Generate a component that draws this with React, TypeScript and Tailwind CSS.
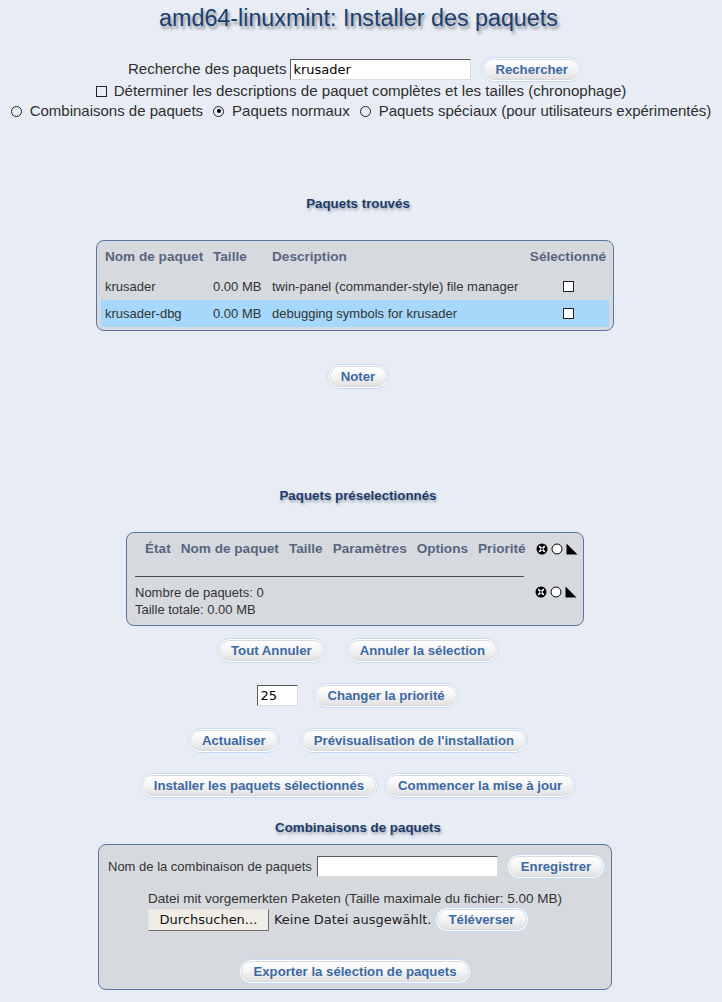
import React from "react";

function Btn({ children, className = "" }: { children: React.ReactNode; className?: string }) {
  return (
    <button
      type="button"
      className={`inline-flex shrink-0 rounded-full border border-[#c3d9f4] bg-white p-px ${className}`}
    >
      <span className="flex h-[21px] items-center whitespace-nowrap rounded-full border border-[#d5d9df] bg-linear-to-b from-white via-[#f4f4f4] to-[#e1e1e1] px-[11px] text-[13.2px] font-bold leading-none text-[#3d69a4]">
        {children}
      </span>
    </button>
  );
}

function TextInput({ value, className = "" }: { value: string; className?: string }) {
  return (
    <div
      className={`flex h-[21px] items-center border border-t-[#5a5a5a] border-l-[#5a5a5a] border-r-[#dcdcdc] border-b-[#dcdcdc] bg-white pl-[2px] font-['DejaVu_Sans',sans-serif] text-[13px] text-black ${className}`}
    >
      {value}
    </div>
  );
}

function Radio({ checked = false }: { checked?: boolean }) {
  return (
    <span className="flex h-[11px] w-[11px] shrink-0 items-center justify-center rounded-full border border-[#222]">
      {checked && <span className="h-[4px] w-[4px] rounded-full bg-black" />}
    </span>
  );
}

function Check({ white = false }: { white?: boolean }) {
  return <span className={`inline-block h-[11px] w-[11px] border border-[#222] ${white ? "bg-white" : ""}`} />;
}

function SelIcons() {
  return (
    <div className="flex items-center gap-[3px]">
      <svg width="12" height="12" viewBox="0 0 12 12">
        <circle cx="6" cy="6" r="5.5" fill="#000" />
        <path d="M3.2 3.2L8.8 8.8M8.8 3.2L3.2 8.8" stroke="#fff" strokeWidth="1.7" />
        <circle cx="6" cy="6" r="1" fill="#000" />
      </svg>
      <svg width="12" height="12" viewBox="0 0 12 12">
        <circle cx="6" cy="6" r="5" fill="#fff" stroke="#000" strokeWidth="1" />
      </svg>
      <svg width="12" height="12" viewBox="0 0 12 12">
        <path d="M0.5 0.5L11.5 11.5L0.5 11.5Z" fill="#000" />
      </svg>
    </div>
  );
}

function Heading({ children, className = "" }: { children: React.ReactNode; className?: string }) {
  return (
    <h2
      className={`ml-[-6px] text-[13.33px] font-bold leading-[20px] text-[#1d3b6a] [text-shadow:1px_2px_3px_#9ba1ab] ${className}`}
    >
      {children}
    </h2>
  );
}

export default function App() {
  return (
    <div className="flex min-h-[1002px] w-full flex-col items-center bg-[#e8edf5] font-['Liberation_Sans',Arial,sans-serif] text-[#2e2e2e]">
      <h1 className="mt-[3px] ml-[-5px] text-[23.3px] leading-[30px] text-[#1c3e6d] [text-shadow:2px_3px_3px_#8d929c]">
        amd64-linuxmint: Installer des paquets
      </h1>

      <div className="mt-[24px] ml-[-12px] flex h-[25px] items-center">
        <span className="text-[15px]">Recherche des paquets</span>
        <TextInput value="krusader" className="ml-[4px] w-[181px]" />
        <Btn className="ml-[10px]">Rechercher</Btn>
      </div>

      <div className="mt-[-1px] flex h-[20px] items-center text-[15.1px]">
        <Check />
        <span className="ml-[7px]">Déterminer les descriptions de paquet complètes et les tailles (chronophage)</span>
      </div>

      <div className="flex h-[20px] items-center text-[15px]">
        <Radio />
        <span className="ml-[8px]">Combinaisons de paquets</span>
        <span className="ml-[10px]">
          <Radio checked />
        </span>
        <span className="ml-[8px]">Paquets normaux</span>
        <span className="ml-[10px]">
          <Radio />
        </span>
        <span className="ml-[8px]">Paquets spéciaux (pour utilisateurs expérimentés)</span>
      </div>

      <Heading className="mt-[73px]">Paquets trouvés</Heading>

      <div className="mt-[26px] ml-[-12px] w-[518px] rounded-[8px] border border-[#5a76a0] bg-[#d6dadf] px-[4px] pt-[2px] pb-[3px]">
        <div className="grid h-[27px] grid-cols-[108px_59px_259px_82px] items-center pt-[2px] text-[13.6px] font-bold text-[#58657f]">
          <span className="pl-[4px]">Nom de paquet</span>
          <span className="pl-[4px]">Taille</span>
          <span className="pl-[4px]">Description</span>
          <span className="text-center">Sélectionné</span>
        </div>
        <div className="mt-[3px] grid h-[27px] grid-cols-[108px_59px_259px_82px] items-center text-[13px] text-[#333]">
          <span className="pl-[4px]">krusader</span>
          <span className="pl-[4px]">0.00 MB</span>
          <span className="pl-[4px]">twin-panel (commander-style) file manager</span>
          <span className="flex justify-center">
            <Check white />
          </span>
        </div>
        <div className="grid h-[27px] grid-cols-[108px_59px_259px_82px] items-center bg-[#a6d8fb] text-[13px] text-[#333]">
          <span className="pl-[4px]">krusader-dbg</span>
          <span className="pl-[4px]">0.00 MB</span>
          <span className="pl-[4px]">debugging symbols for krusader</span>
          <span className="flex justify-center">
            <Check white />
          </span>
        </div>
      </div>

      <Btn className="mt-[33px] ml-[-6px]">Noter</Btn>

      <Heading className="mt-[97px]">Paquets préselectionnés</Heading>

      <div className="mt-[26px] ml-[-12px] w-[458px] rounded-[8px] border border-[#5a76a0] bg-[#d6dadf] pt-[7px] pb-[7px] pl-[8px]">
        <div className="ml-[10px] flex h-[18px] items-center gap-[10px] text-[13.6px] font-bold text-[#58657f]">
          <span>État</span>
          <span>Nom de paquet</span>
          <span>Taille</span>
          <span>Paramètres</span>
          <span>Options</span>
          <span>Priorité</span>
          <SelIcons />
        </div>
        <div className="mt-[18px] h-px w-[389px] bg-[#4a4a4a]" />
        <div className="mt-[7px] flex">
          <div className="w-[400px] text-[13px] leading-[17px] text-[#333]">
            <div>Nombre de paquets: 0</div>
            <div>Taille totale: 0.00 MB</div>
          </div>
          <div className="mt-[2px]">
            <SelIcons />
          </div>
        </div>
      </div>

      <div className="mt-[12px] ml-[-6px] flex gap-[20px]">
        <Btn>Tout Annuler</Btn>
        <Btn>Annuler la sélection</Btn>
      </div>

      <div className="mt-[20px] ml-[-6px] flex h-[25px] items-center gap-[15px]">
        <TextInput value="25" className="h-[20px] w-[41px]" />
        <Btn>Changer la priorité</Btn>
      </div>

      <div className="mt-[20px] ml-[-6px] flex gap-[20px]">
        <Btn>Actualiser</Btn>
        <Btn>Prévisualisation de l'installation</Btn>
      </div>

      <div className="mt-[20px] ml-[-6px] flex gap-[6px]">
        <Btn>Installer les paquets sélectionnés</Btn>
        <Btn>Commencer la mise à jour</Btn>
      </div>

      <Heading className="mt-[20px]">Combinaisons de paquets</Heading>

      <div className="mt-[6px] ml-[-12px] flex w-[514px] flex-col rounded-[8px] border border-[#5a76a0] bg-[#d6dadf] pt-[9px] pb-[5px]">
        <div className="flex h-[25px] items-center pl-[9px]">
          <span className="text-[13px] text-[#333]">Nom de la combinaison de paquets</span>
          <TextInput value="" className="ml-[5px] w-[181px]" />
          <Btn className="ml-[9px]">Enregistrer</Btn>
        </div>
        <div className="mt-[11px] self-center">
          <div className="h-[17px] text-[13.5px] leading-[17px] text-[#333]">
            Datei mit vorgemerkten Paketen (Taille maximale du fichier: 5.00 MB)
          </div>
          <div className="flex h-[25px] items-center">
            <div className="flex h-[22px] w-[121px] items-center justify-center border border-t-[#e4e4e4] border-l-[#e4e4e4] border-r-[#6c6c6c] border-b-[#6c6c6c] bg-[#efede6] font-['DejaVu_Sans',sans-serif] text-[13px] text-[#111]">
              Durchsuchen...
            </div>
            <span className="ml-[5px] font-['DejaVu_Sans',sans-serif] text-[13px] text-[#222]">
              Keine Datei ausgewählt.
            </span>
            <Btn className="ml-[3px]">Téléverser</Btn>
          </div>
        </div>
        <Btn className="mt-[27px] self-center">Exporter la sélection de paquets</Btn>
      </div>
    </div>
  );
}
